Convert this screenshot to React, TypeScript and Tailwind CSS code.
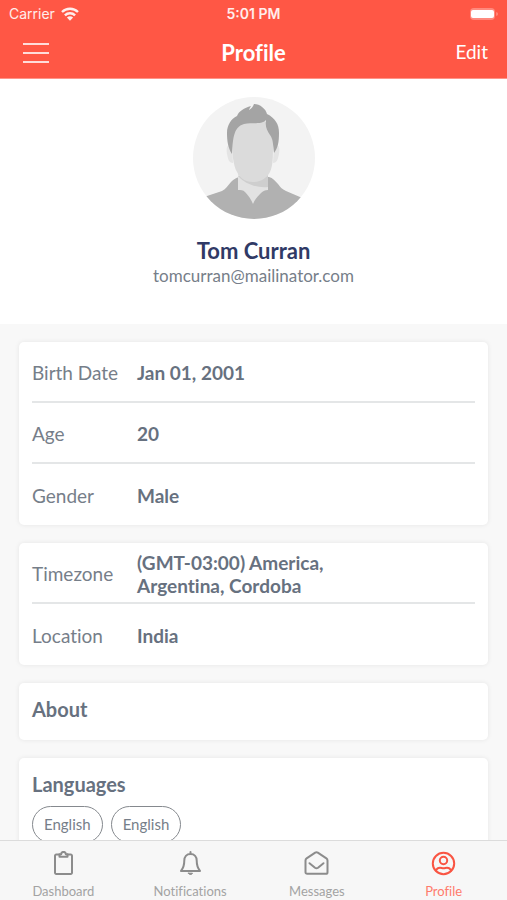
import type { ReactNode } from "react";

/**
 * Profile Page
 *
 * Header on top, scrolling details in the middle, tab bar at the bottom.
 */

const personalDetails = [
  { label: "Birth Date", value: "Jan 01, 2001" },
  { label: "Age", value: "20" },
  { label: "Gender", value: "Male" },
];

const placeDetails = [
  { label: "Timezone", value: "(GMT-03:00) America, Argentina, Cordoba" },
  { label: "Location", value: "India" },
];

const languages = ["English", "English"];

export default function App() {
  return (
    <div className="flex h-screen flex-col bg-[#f8f8f8] font-['Lato',sans-serif] text-[#767e89] [font-variant-ligatures:no-common-ligatures]">
      <Header />

      <main className="min-h-0 flex-1 overflow-y-auto [scrollbar-width:none]">
        <ProfileSummary />

        <div className="flex flex-col gap-[18px] px-[19px] py-[18px]">
          <DetailCard items={personalDetails} />
          <DetailCard items={placeDetails} />

          <Card>
            <div className="px-[13px] pt-[15px] pb-[19px]">
              <SectionTitle>About</SectionTitle>
            </div>
          </Card>

          <Card>
            <div className="px-[13px] pt-[15px] pb-[19px]">
              <SectionTitle>Languages</SectionTitle>
              <ul className="mt-[10px] flex flex-wrap gap-2">
                {languages.map((language, i) => (
                  <li
                    key={i}
                    className="flex h-[37px] items-center rounded-full border border-[#85898e] px-[11px] text-[15px]"
                  >
                    {language}
                  </li>
                ))}
              </ul>
            </div>
          </Card>
        </div>
      </main>

      <TabBar />
    </div>
  );
}

// --- Sub-Components ---

function Header() {
  return (
    <header className="border-b border-[#ff9488] bg-[#ff5745] text-white">
      <div className="grid h-[27px] grid-cols-3 items-center px-[9px] font-['Inter',sans-serif] text-[14px] text-white/90">
        <div className="flex items-center gap-[6px]">
          <span>Carrier</span>
          <WifiIcon />
        </div>
        <span className="text-center font-semibold whitespace-nowrap">5:01 PM</span>
        <div className="flex justify-end">
          <BatteryIcon />
        </div>
      </div>

      <div className="grid h-[51px] grid-cols-3 items-center px-[19px]">
        <button aria-label="Menu" className="flex w-8 flex-col gap-[7px] px-1">
          <span className="h-[2px] w-[26px] bg-white/80" />
          <span className="h-[2px] w-[26px] bg-white/80" />
          <span className="h-[2px] w-[26px] bg-white/80" />
        </button>
        <h1 className="text-center text-[22px] font-bold">Profile</h1>
        <button className="justify-self-end text-[19px]">Edit</button>
      </div>
    </header>
  );
}

function ProfileSummary() {
  return (
    <section className="flex flex-col items-center bg-white pt-[18px] pb-9">
      <Avatar />
      <h2 className="mt-[19px] text-[22px] leading-[26px] font-bold text-[#303a66]">Tom Curran</h2>
      <p className="text-[17px] leading-6">tomcurran@mailinator.com</p>
    </section>
  );
}

function Card({ children }: { children: ReactNode }) {
  return <section className="rounded-[5px] bg-white shadow-[0_0_5px_rgba(0,0,0,0.08)]">{children}</section>;
}

function SectionTitle({ children }: { children: ReactNode }) {
  return <h3 className="text-[20px] leading-[23px] font-bold text-[#67717f]">{children}</h3>;
}

/**
 * DetailCard
 * Label and value pairs with a rule between the rows.
 */
function DetailCard({ items }: { items: { label: string; value: string }[] }) {
  return (
    <Card>
      <dl className="divide-y-2 divide-[#e4e6e7] px-[13px]">
        {items.map(({ label, value }) => (
          <div key={label} className="flex h-[61px] items-center pt-[2px] text-[19px] leading-[23px]">
            <dt className="w-[105px] shrink-0">{label}</dt>
            <dd className="max-w-[220px] font-bold text-[#67717f]">{value}</dd>
          </div>
        ))}
      </dl>
    </Card>
  );
}

function TabBar() {
  return (
    <nav className="grid h-[60px] shrink-0 grid-cols-4 border-t border-[#dcdcdc] bg-[#f7f7f7] text-[13px] text-[#a3a3a3]">
      <Tab label="Dashboard">
        <path d="M8.500 3.500H5.200A1.200 1.200 0 0 0 4 4.700v17.100A1.200 1.200 0 0 0 5.200 23h14.600a1.200 1.200 0 0 0 1.200-1.200V4.700a1.200 1.200 0 0 0-1.200-1.200h-3.300" />
        <path d="M8.500 3.200h1.700a2.300 2.300 0 0 1 4.600 0h1.700v2.600h-8z" />
      </Tab>
      <Tab label="Notifications">
        <path d="M12.500 3C8.500 3 6.300 6 6.300 9.600c0 5.400-1.100 7.800-3.300 10.300h19c-2.200-2.500-3.300-4.900-3.300-10.300C18.700 6 16.500 3 12.500 3zM12.500 1v2" />
        <path d="M10.500 22.200h4c-.4.900-1.100 1.300-2 1.300s-1.600-.4-2-1.300z" fill="currentColor" strokeWidth="1" />
      </Tab>
      <Tab label="Messages">
        <path d="M1.500 9.500c0-.9.400-1.600 1.100-2.100l8.600-5.700c.8-.5 1.800-.5 2.600 0l8.600 5.700c.7.500 1.100 1.200 1.100 2.100v11.700c0 .9-.7 1.600-1.600 1.600H3.100c-.9 0-1.600-.7-1.600-1.600z" />
        <path d="M5.500 12.200l5.500 4.500c.9.700 2.100.7 3 0l5.500-4.500" />
      </Tab>
      <Tab label="Profile" active>
        <circle cx="12.500" cy="12.500" r="10.700" />
        <circle cx="12.500" cy="9.500" r="3.700" />
        <path d="M5 19.500c.8-2 2.300-2.800 4-2.800 1.200 0 2.200.6 3.500.6s2.300-.6 3.500-.6c1.700 0 3.200.8 4 2.800" />
      </Tab>
    </nav>
  );
}

function Tab({ label, active, children }: { label: string; active?: boolean; children: ReactNode }) {
  return (
    <a
      href="#"
      aria-current={active ? "page" : undefined}
      className={`flex flex-col items-center gap-[7px] pt-[10px] ${active ? "text-[#ff7b6c]" : ""}`}
    >
      <svg
        viewBox="0 0 25 25"
        className={`size-[25px] ${active ? "text-[#f95543]" : "text-[#8c8c8c]"}`}
        fill="none"
        stroke="currentColor"
        strokeWidth="2"
        strokeLinecap="round"
        strokeLinejoin="round"
      >
        {children}
      </svg>
      <span className="leading-4">{label}</span>
    </a>
  );
}

// --- Drawings ---

function Avatar() {
  return (
    <svg viewBox="0 0 122 122" className="size-[122px]" role="img" aria-label="Tom Curran">
      <clipPath id="avatar-circle">
        <circle cx="61" cy="61" r="61" />
      </clipPath>
      <g clipPath="url(#avatar-circle)">
        <rect width="122" height="122" fill="#f3f3f3" />
        <path d="M0 122v-18l14-5 15-5c4-2 6-6 9-9 2-2 4-4 8-5h30c4 1 6 4 9 7 2 3 4 5 8 7l14 6 15 6v16z" fill="#b1b1b1" />
        <path d="M45 76v17c3 0 5 0 7 2 3 3 6 7 8 12 2-5 5-8 8-11 2-2 4-3 7-3V76z" fill="#e2e2e2" />
        <path d="M45 79c8 9 20 12 30 11V78z" fill="#cecece" />
        <path d="M39 48c-5-1-6 3-5 9 1 5 2 9 6 9zM81 48c5-1 6 3 5 9-1 5-2 9-6 9z" fill="#e4e4e4" />
        <path d="M39 40c1-8 6-14 13-15l19-2c5 6 9 13 9 25 0 11 0 21-3 27-3 6-9 10-17 10s-13-4-16-10c-4-7-5-19-5-35z" fill="#dbdbdb" />
        <path d="M39 57c-4-6-5-13-5-21 0-8 4-14 10-17 2-5 7-8 14-10-1 2-2 3-2 4 2-1 4-3 5-6 6 0 12 5 13 10 8 4 12 10 12 19 0 9-1 15-5 20-1-9-1-14-4-18-3-5-5-8-4-15-4 5-13 2-22 4-11 3-11 16-12 30z" fill="#a4a4a4" />
      </g>
    </svg>
  );
}

function WifiIcon() {
  return (
    <svg viewBox="0 0 18 14" className="h-[14px] w-[18px]" fill="none" stroke="currentColor" strokeWidth="2.400">
      <path d="M1 5a11.500 11.500 0 0 1 16 0M3.900 8.300a7.300 7.300 0 0 1 10.200 0" />
      <path d="M5.900 10.600a4.500 4.500 0 0 1 6.200 0L9 13.800z" fill="currentColor" stroke="none" />
    </svg>
  );
}

function BatteryIcon() {
  return (
    <svg viewBox="0 0 30 14" className="h-[14px] w-[30px]">
      <rect x="2" y="1" width="25" height="12" rx="4" fill="#fff" fillOpacity="0.300" />
      <rect x="3" y="3" width="23" height="8" rx="2" fill="#fff" />
      <path d="M28.500 5v4c1.500-.5 1.500-3.500 0-4z" fill="#fff" fillOpacity="0.500" />
    </svg>
  );
}
